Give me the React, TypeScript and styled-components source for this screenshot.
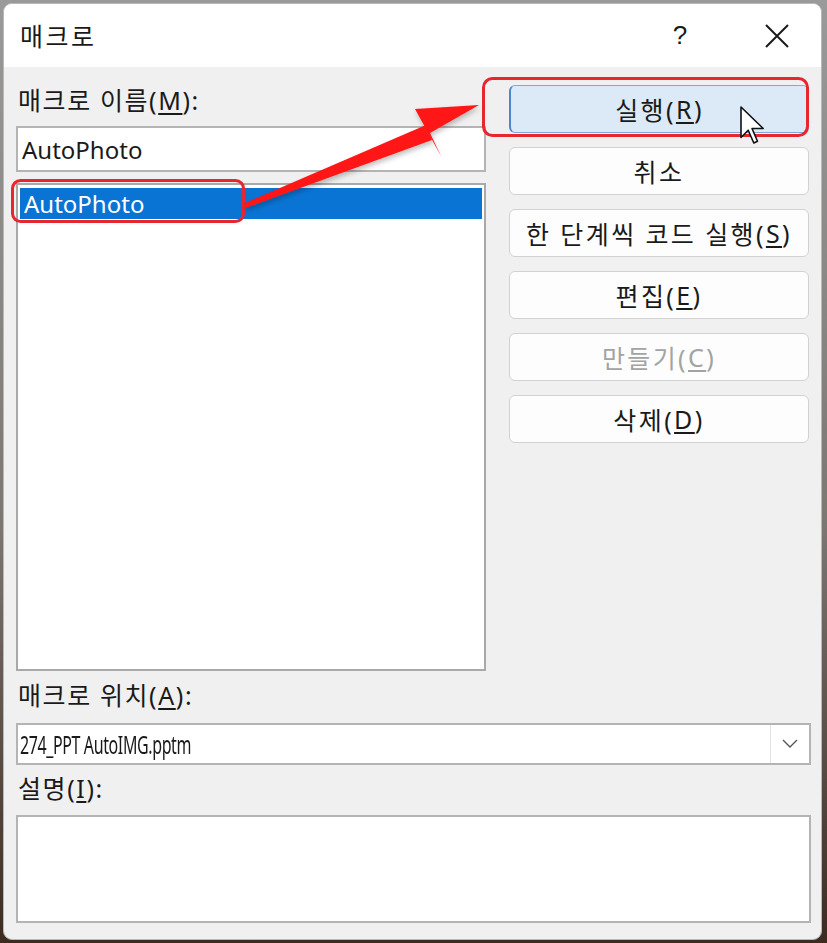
import React from 'react';
import styled, { createGlobalStyle } from 'styled-components';

const GlobalStyle = createGlobalStyle`
  html, body {
    margin: 0;
    padding: 0;
  }
  body {
    width: 827px;
    height: 943px;
    overflow: hidden;
    background: linear-gradient(180deg, #9a9a9a 0%, #7d7772 55%, #3e2b20 100%);
    font-family: "Noto Sans", "Noto Sans CJK KR", sans-serif;
    color: #1a1a1a;
  }
`;

const Screen = styled.div`
  position: relative;
  width: 827px;
  height: 943px;
  padding: 3px 5px 3px 3px;
  box-sizing: border-box;
`;

const Window = styled.div`
  width: 819px;
  height: 937px;
  box-sizing: border-box;
  background: #f0f0f0;
  border: 1px solid #b8b8b8;
  border-radius: 9px;
  overflow: hidden;
  display: flex;
  flex-direction: column;
`;

const TitleBar = styled.div`
  height: 63px;
  flex-shrink: 0;
  background: #ffffff;
  display: flex;
  align-items: center;
  padding-left: 16px;
`;

const Title = styled.div`
  font-size: 25px;
  letter-spacing: 2.5px;
  flex: 1;
  padding-bottom: 2px;
`;

const HelpButton = styled.div`
  width: 60px;
  margin-right: 23px;
  text-align: center;
  font-size: 26px;
  font-family: "Liberation Sans", sans-serif;
`;

const CloseButton = styled.div`
  width: 88px;
  height: 63px;
  display: flex;
  align-items: center;
  justify-content: center;
`;

const Body = styled.div`
  flex: 1;
  display: flex;
  flex-direction: column;
  padding: 18px 10px 16px 12px;
`;

const TopSection = styled.div`
  display: grid;
  grid-template-columns: 470px 300px;
  column-gap: 23px;
`;

const LeftColumn = styled.div`
  display: flex;
  flex-direction: column;
`;

const Label = styled.div<{ $mt?: number; $mb?: number }>`
  height: 30px;
  line-height: 30px;
  font-size: 25px;
  letter-spacing: 1.6px;
  padding-left: 2px;
  margin-top: ${(p) => p.$mt ?? 0}px;
  margin-bottom: ${(p) => p.$mb ?? 0}px;
  white-space: nowrap;

  u {
    text-underline-offset: 3px;
  }
`;

const TextInput = styled.div`
  height: 46px;
  box-sizing: border-box;
  background: #ffffff;
  border: 2px solid #b4b4b4;
  display: flex;
  align-items: center;
  padding-left: 4px;
  font-size: 24px;
  margin-bottom: 11px;
`;

const ListBox = styled.div`
  height: 488px;
  box-sizing: border-box;
  background: #ffffff;
  border: 2px solid #a9a9a9;
  padding: 3px 2px;
`;

const ListItem = styled.div<{ $selected?: boolean }>`
  height: 31px;
  line-height: 31px;
  padding-left: 4px;
  font-size: 24px;
  background: ${(p) => (p.$selected ? '#0a74d4' : 'transparent')};
  color: ${(p) => (p.$selected ? '#ffffff' : '#1a1a1a')};
`;

const ButtonColumn = styled.div`
  display: flex;
  flex-direction: column;
  gap: 14px;
`;

const DialogButton = styled.div<{ $primary?: boolean; $disabled?: boolean }>`
  height: 48px;
  box-sizing: border-box;
  border-radius: 6px;
  border: 1px solid ${(p) => (p.$primary ? '#7fa8d6' : '#d2d2d2')};
  border-left: ${(p) => (p.$primary ? '2px solid #4d86c9' : '1px solid #d2d2d2')};
  background: ${(p) => (p.$primary ? '#dce9f6' : '#fdfdfd')};
  color: ${(p) => (p.$disabled ? '#a3a3a3' : '#1a1a1a')};
  display: flex;
  align-items: center;
  justify-content: center;
  font-size: 25px;
  letter-spacing: 2.4px;
  white-space: nowrap;

  u {
    text-underline-offset: 3px;
  }
`;

const ComboBox = styled.div`
  height: 42px;
  box-sizing: border-box;
  background: #ffffff;
  border: 2px solid #b4b4b4;
  display: flex;
  align-items: stretch;
`;

const ComboText = styled.div`
  flex: 1;
  display: flex;
  align-items: center;
  padding-left: 3px;
  font-size: 25px;
  letter-spacing: -0.6px;
  transform: scaleX(0.64);
  transform-origin: left center;
  white-space: nowrap;
`;

const ComboArrow = styled.div`
  width: 38px;
  border-left: 1px solid #e3e3e3;
  display: flex;
  align-items: center;
  justify-content: center;
`;

const TextArea = styled.div`
  height: 108px;
  box-sizing: border-box;
  background: #ffffff;
  border: 2px solid #b4b4b4;
`;

const Overlay = styled.svg`
  position: absolute;
  top: 0;
  left: 0;
  width: 827px;
  height: 943px;
  pointer-events: none;
`;

const buttons = [
  { label: '실행', key: 'R', primary: true },
  { label: '취소' },
  { label: '한 단계씩 코드 실행', key: 'S' },
  { label: '편집', key: 'E' },
  { label: '만들기', key: 'C', disabled: true },
  { label: '삭제', key: 'D' },
];

export default function App() {
  return (
    <Screen>
      <GlobalStyle />
      <Window>
        <TitleBar>
          <Title>매크로</Title>
          <HelpButton>?</HelpButton>
          <CloseButton>
            <svg width="26" height="26" viewBox="0 0 26 26">
              <path d="M2 2 L24 24 M24 2 L2 24" stroke="#1a1a1a" strokeWidth="2" fill="none" />
            </svg>
          </CloseButton>
        </TitleBar>
        <Body>
          <TopSection>
            <LeftColumn>
              <Label $mb={11}>
                매크로 이름(<u>M</u>):
              </Label>
              <TextInput>AutoPhoto</TextInput>
              <ListBox>
                <ListItem $selected>AutoPhoto</ListItem>
              </ListBox>
            </LeftColumn>
            <ButtonColumn>
              {buttons.map((b) => (
                <DialogButton key={b.label} $primary={b.primary} $disabled={b.disabled}>
                  {b.label}
                  {b.key && (
                    <>
                      (<u>{b.key}</u>)
                    </>
                  )}
                </DialogButton>
              ))}
            </ButtonColumn>
          </TopSection>
          <Label $mt={9} $mb={13}>
            매크로 위치(<u>A</u>):
          </Label>
          <ComboBox>
            <ComboText>274_PPT AutoIMG.pptm</ComboText>
            <ComboArrow>
              <svg width="16" height="10" viewBox="0 0 16 10">
                <path d="M1 1 L8 8 L15 1" stroke="#555" strokeWidth="1.4" fill="none" />
              </svg>
            </ComboArrow>
          </ComboBox>
          <Label $mt={8} $mb={12}>
            설명(<u>I</u>):
          </Label>
          <TextArea />
        </Body>
      </Window>
      <Overlay viewBox="0 0 827 943">
        <defs>
          <filter id="shadow" x="-10%" y="-10%" width="120%" height="130%">
            <feDropShadow dx="1" dy="3" stdDeviation="2.5" floodColor="#000" floodOpacity="0.25" />
          </filter>
        </defs>
        <rect x="12.5" y="180.5" width="231" height="41" rx="8" fill="none" stroke="#e8262e" strokeWidth="3" />
        <rect x="483.5" y="78.5" width="324" height="57" rx="9" fill="none" stroke="#e8262e" strokeWidth="3" />
        <g filter="url(#shadow)" fill="#ff1414">
          <polygon points="244,203.5 245.5,208 432,140 426,125" />
          <polygon points="479,105 415,109 441,156 430,133" />
        </g>
        <polygon
          points="741,107 741,137.5 748.2,130.2 753.8,143 757.5,141.3 752,128.5 763.2,128.5"
          fill="#ffffff"
          stroke="#111"
          strokeWidth="1.6"
          strokeLinejoin="round"
        />
      </Overlay>
    </Screen>
  );
}
